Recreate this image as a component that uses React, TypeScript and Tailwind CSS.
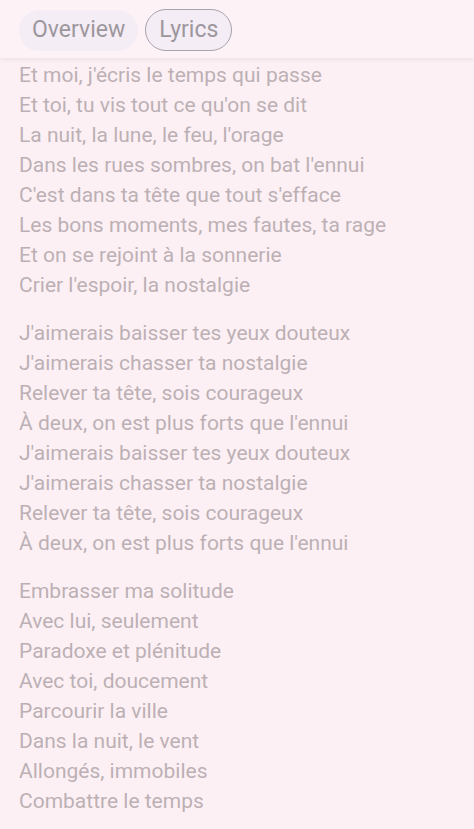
const stanzas = [
  [
    "Et moi, j'écris le temps qui passe",
    "Et toi, tu vis tout ce qu'on se dit",
    "La nuit, la lune, le feu, l'orage",
    "Dans les rues sombres, on bat l'ennui",
    "C'est dans ta tête que tout s'efface",
    "Les bons moments, mes fautes, ta rage",
    "Et on se rejoint à la sonnerie",
    "Crier l'espoir, la nostalgie",
  ],
  [
    "J'aimerais baisser tes yeux douteux",
    "J'aimerais chasser ta nostalgie",
    "Relever ta tête, sois courageux",
    "À deux, on est plus forts que l'ennui",
    "J'aimerais baisser tes yeux douteux",
    "J'aimerais chasser ta nostalgie",
    "Relever ta tête, sois courageux",
    "À deux, on est plus forts que l'ennui",
  ],
  [
    "Embrasser ma solitude",
    "Avec lui, seulement",
    "Paradoxe et plénitude",
    "Avec toi, doucement",
    "Parcourir la ville",
    "Dans la nuit, le vent",
    "Allongés, immobiles",
    "Combattre le temps",
  ],
];

const App = () => {
  return (
    <div
      className="h-[829px] w-[474px] overflow-hidden bg-[#fcf0f4]"
      style={{ fontFamily: "Roboto, 'Noto Sans', sans-serif" }}
    >
      {/* Tabs */}
      <div className="relative z-10 flex h-[58px] items-center gap-[7px] bg-[#fdf2f5] px-[19px] pt-[2px] shadow-[0_2px_4px_rgba(0,0,0,0.06)]">
        <div className="flex h-[41px] items-center rounded-full bg-[#f4edf6] px-[13px] text-[23px] text-[#9d979d]">
          Overview
        </div>
        <div className="flex h-[42px] items-center rounded-full border border-[#aaa3ab] bg-[#f4edf6] px-[13px] text-[23px] text-[#9d979d]">
          Lyrics
        </div>
      </div>

      {/* Lyrics */}
      <div className="flex flex-col gap-[18px] px-[19px] pt-[2px]">
        {stanzas.map((stanza, i) => (
          <div key={i} className="flex flex-col">
            {stanza.map((line, j) => (
              <p key={j} className="text-[21px] leading-[30px] text-[#bcb0b5]">
                {line}
              </p>
            ))}
          </div>
        ))}
      </div>
    </div>
  );
};

export default App;
